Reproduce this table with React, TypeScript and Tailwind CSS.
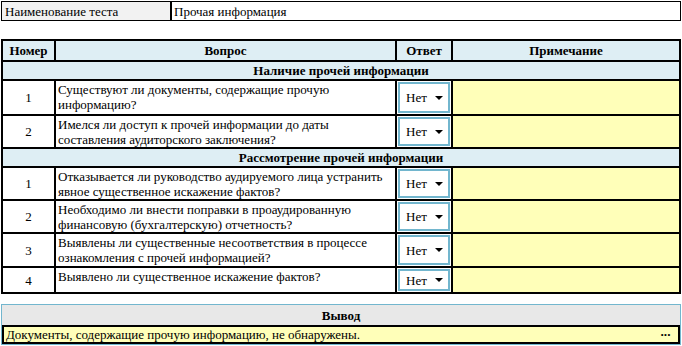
import { Fragment } from 'react';

const sections = [
  {
    title: 'Наличие прочей информации',
    rows: [
      { n: 1, q: 'Существуют ли документы, содержащие прочую информацию?', h: 'h-[35px]' },
      { n: 2, q: 'Имелся ли доступ к прочей информации до даты составления аудиторского заключения?', h: 'h-[33px]' },
    ],
  },
  {
    title: 'Рассмотрение прочей информации',
    rows: [
      { n: 1, q: 'Отказывается ли  руководство аудируемого лица устранить явное существенное искажение фактов?', h: 'h-[33px]' },
      { n: 2, q: 'Необходимо ли внести поправки в проаудированную финансовую (бухгалтерскую) отчетность?', h: 'h-[33px]' },
      { n: 3, q: 'Выявлены ли существенные несоответствия в процессе ознакомления с прочей информацией?', h: 'h-[34px]' },
      { n: 4, q: 'Выявлено ли существенное искажение фактов?', h: 'h-[26px]' },
    ],
  },
];

const AnswerSelect = () => (
  <div className="flex h-full items-center justify-between border-2 border-[#72b6ce] bg-white pl-[6px] pr-[5px]">
    <span>Нет</span>
    <svg width="8" height="4" viewBox="0 0 8 4">
      <path d="M0 0h8L4 4z" fill="#000" />
    </svg>
  </div>
);

export default function App() {
  return (
    <div className="w-[682px] h-[346px] bg-white px-px pt-px font-['Liberation_Serif',serif] text-[13px] leading-[15px] text-black">
      <div className="flex h-[20px] border border-black">
        <div className="w-[170px] border-r-2 border-black bg-[#f2f2f2] px-[3px] pt-[2px]">Наименование теста</div>
        <div className="flex-1 px-[2px] pt-[2px]">Прочая информация</div>
      </div>

      <table className="mt-[18px] w-[680px] table-fixed border border-black border-separate border-spacing-0">
        <colgroup>
          <col className="w-[53px]" />
          <col className="w-[341px]" />
          <col className="w-[56px]" />
          <col />
        </colgroup>
        <thead>
          <tr className="h-[21px] bg-[#deeef4] font-bold">
            <th className="border border-black">Номер</th>
            <th className="border border-black">Вопрос</th>
            <th className="border border-black">Ответ</th>
            <th className="border border-black">Примечание</th>
          </tr>
        </thead>
        <tbody>
          {sections.map(section => (
            <Fragment key={section.title}>
              <tr className="h-[19px] bg-[#deeef4]">
                <td colSpan={4} className="border border-black text-center font-bold">{section.title}</td>
              </tr>
              {section.rows.map(row => (
                <tr key={row.n} className={row.h}>
                  <td className="border border-black text-center align-middle">{row.n}</td>
                  <td className="border border-black px-[2px] pt-px align-top">{row.q}</td>
                  <td className="border border-black p-px h-[inherit]">
                    <AnswerSelect />
                  </td>
                  <td className="border border-black bg-[#ffffb9]"></td>
                </tr>
              ))}
            </Fragment>
          ))}
        </tbody>
      </table>

      <div className="mt-[10px] border border-[#72b6ce]">
        <div className="flex h-[20px] items-center justify-center bg-[#e8e8e8] font-bold">Вывод</div>
        <div className="flex h-[19px] items-center justify-between border-2 border-black bg-[#ffffb9] pl-[2px] pr-[8px]">
          <span>Документы, содержащие прочую информацию, не обнаружены.</span>
          <span className="font-bold tracking-[-1px]">···</span>
        </div>
      </div>
    </div>
  );
}
